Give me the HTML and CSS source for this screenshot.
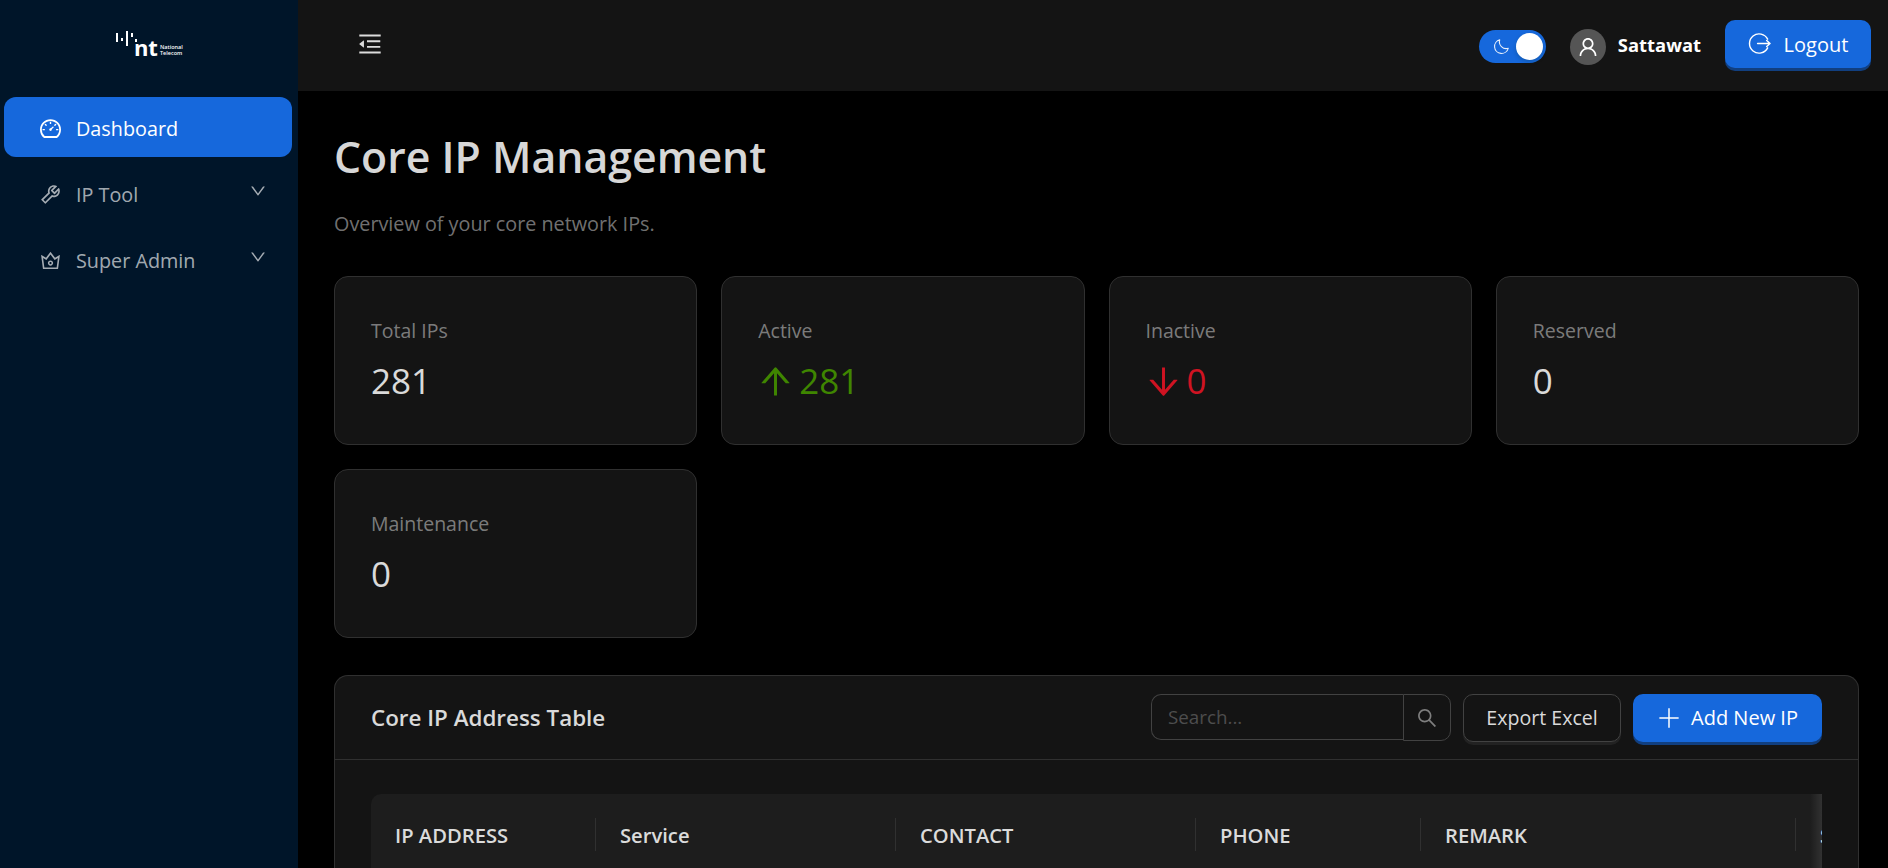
FILE: index.html
```html
<!DOCTYPE html>
<html lang="en">
<head>
<meta charset="utf-8">
<title>Core IP Management</title>
<link rel="stylesheet" href="styles.css">
</head>
<body>
<div class="app">
  <aside class="sidebar">
    <div class="logo">
      <div class="logo-ticks">
        <span class="tick t1"></span><span class="tick t2"></span><span class="tick t3"></span><span class="tick t4"></span><span class="tick t5"></span>
      </div>
      <span class="logo-nt">nt</span>
      <span class="logo-sub">National<br>Telecom</span>
    </div>
    <nav class="menu">
      <a class="menu-item active">
        <svg class="menu-icon" viewBox="64 64 896 896" fill="currentColor"><path d="M924.8 385.6a446.7 446.7 0 00-96-142.4 446.7 446.7 0 00-142.4-96C631.1 123.8 572.5 112 512 112s-119.1 11.8-174.4 35.2a446.7 446.7 0 00-142.4 96 446.7 446.7 0 00-96 142.4C76 440.9 64 499.5 64 560c0 132.7 58.3 257.7 159.9 343.1l1.7 1.4c5.8 4.8 13.1 7.5 20.6 7.5h531.7c7.5 0 14.8-2.7 20.6-7.5l1.7-1.4C901.7 817.7 960 692.7 960 560c0-60.5-12-119.1-35.2-174.4zM761.4 836H262.6A371.12 371.12 0 01140 560c0-99.4 38.7-192.8 109-263 70.3-70.3 163.7-109 263-109 99.4 0 192.8 38.7 263 109 70.3 70.3 109 163.7 109 263 0 105.6-44.5 205.5-122.6 276zM623.5 421.5a8.03 8.03 0 00-11.3 0L527.7 506c-18.7-5-39.4-.2-54.1 14.5a55.95 55.95 0 000 79.2 55.95 55.95 0 0079.2 0 55.87 55.87 0 0014.5-54.1l84.5-84.5c3.1-3.1 3.1-8.2 0-11.3l-28.3-28.3zM490 320h44c4.4 0 8-3.6 8-8v-80c0-4.4-3.6-8-8-8h-44c-4.4 0-8 3.6-8 8v80c0 4.4 3.6 8 8 8zm260 218v44c0 4.4 3.6 8 8 8h80c4.4 0 8-3.6 8-8v-44c0-4.4-3.6-8-8-8h-80c-4.4 0-8 3.6-8 8zm12.7-197.2l-31.1-31.1a8.03 8.03 0 00-11.3 0l-56.6 56.6a8.03 8.03 0 000 11.3l31.1 31.1c3.1 3.1 8.2 3.1 11.3 0l56.6-56.6c3.1-3.1 3.1-8.2 0-11.3zm-458.6-31.1a8.03 8.03 0 00-11.3 0l-31.1 31.1a8.03 8.03 0 000 11.3l56.6 56.6c3.1 3.1 8.2 3.1 11.3 0l31.1-31.1c3.1-3.1 3.1-8.2 0-11.3l-56.6-56.6zM262 530h-80c-4.4 0-8 3.6-8 8v44c0 4.4 3.6 8 8 8h80c4.4 0 8-3.6 8-8v-44c0-4.4-3.6-8-8-8z"/></svg>
        <span class="menu-label">Dashboard</span>
      </a>
      <a class="menu-item">
        <svg class="menu-icon" viewBox="64 64 896 896" fill="currentColor"><path d="M876.6 239.5c-.5-.9-1.2-1.8-2-2.5-5-5-13.1-5-18.1 0L684.2 409.3l-67.9-67.9L788.7 169c.8-.8 1.4-1.6 2-2.5 3.6-6.1 1.6-13.9-4.5-17.5-98.2-58-226.8-44.7-311.3 39.7-67 67-89.2 162-66.5 247.4l-293 293c-3 3-2.8 7.9.3 11l169.7 169.7c3.1 3.1 8.1 3.3 11 .3l292.9-292.9c85.5 22.8 180.5.7 247.6-66.4 84.4-84.5 97.7-213.1 39.7-311.3zM786 499.8c-58.1 58.1-145.3 69.3-214.6 33.6l-8.8 8.8-.1-.1-274 274.1-79.2-79.2 230.1-230.1s0 .1.1.1l52.8-52.8c-35.7-69.3-24.5-156.5 33.6-214.6a184.2 184.2 0 01144-53.5L537 318.9a32.05 32.05 0 000 45.3l124.5 124.5a32.05 32.05 0 0045.3 0l132.8-132.8c3.7 51.8-14.4 104.8-53.6 143.9z"/></svg>
        <span class="menu-label">IP Tool</span>
        <svg class="menu-caret" viewBox="64 64 896 896" fill="currentColor"><path d="M884 256h-75c-5.1 0-9.9 2.5-12.9 6.6L512 654.2 227.9 262.6c-3-4.1-7.8-6.6-12.9-6.6h-75c-6.5 0-10.3 7.4-6.5 12.7l352.6 486.1c12.8 17.6 39 17.6 51.7 0l352.6-486.1c3.9-5.3.1-12.7-6.4-12.7z"/></svg>
      </a>
      <a class="menu-item">
        <svg class="menu-icon" viewBox="64 64 896 896" fill="currentColor"><path d="M899.6 276.5L705 396.4 518.4 147.5a8.06 8.06 0 00-12.9 0L319 396.4 124.3 276.5c-5.7-3.5-13.1 1.2-12.2 7.9L188.5 865c1.1 7.9 7.9 14 16 14h615.1c8 0 14.9-6 15.9-14l76.4-580.6c.8-6.7-6.5-11.4-12.3-7.9zm-126 534.1H250.3l-53.8-409.4 139.8 86.1L512 252.9l175.7 234.4 139.8-86.1-53.9 409.4zM512 509c-62.1 0-112.6 50.5-112.6 112.6S449.9 734.2 512 734.2s112.6-50.5 112.6-112.6S574.1 509 512 509zm0 160.9c-26.6 0-48.2-21.6-48.2-48.3 0-26.6 21.6-48.3 48.2-48.3 26.6 0 48.2 21.6 48.2 48.3 0 26.7-21.6 48.3-48.2 48.3z"/></svg>
        <span class="menu-label">Super Admin</span>
        <svg class="menu-caret" viewBox="64 64 896 896" fill="currentColor"><path d="M884 256h-75c-5.1 0-9.9 2.5-12.9 6.6L512 654.2 227.9 262.6c-3-4.1-7.8-6.6-12.9-6.6h-75c-6.5 0-10.3 7.4-6.5 12.7l352.6 486.1c12.8 17.6 39 17.6 51.7 0l352.6-486.1c3.9-5.3.1-12.7-6.4-12.7z"/></svg>
      </a>
    </nav>
  </aside>

  <div class="main">
    <header class="topbar">
      <svg class="collapse-icon" viewBox="64 64 896 896" fill="currentColor"><path d="M408 442h480c4.4 0 8-3.6 8-8v-56c0-4.4-3.6-8-8-8H408c-4.4 0-8 3.6-8 8v56c0 4.4 3.6 8 8 8zm-8 204c0 4.4 3.6 8 8 8h480c4.4 0 8-3.6 8-8v-56c0-4.4-3.6-8-8-8H408c-4.4 0-8 3.6-8 8v56zm504-486H120c-4.4 0-8 3.6-8 8v56c0 4.4 3.6 8 8 8h784c4.4 0 8-3.6 8-8v-56c0-4.4-3.6-8-8-8zm0 632H120c-4.4 0-8 3.6-8 8v56c0 4.4 3.6 8 8 8h784c4.4 0 8-3.6 8-8v-56c0-4.4-3.6-8-8-8zM115.4 518.9L271.7 642c5.8 4.6 14.4.5 14.4-6.9V388.9c0-7.4-8.5-11.5-14.4-6.9L115.4 505.1a8.74 8.74 0 000 13.8z"/></svg>
      <div class="topbar-right">
        <div class="toggle">
          <svg class="toggle-moon" viewBox="0 0 24 24" fill="none" stroke="currentColor" stroke-width="1.5" stroke-linejoin="round"><path d="M9.5 2.5A9.6 9.6 0 0 0 21.5 14.5 9.8 9.8 0 1 1 9.5 2.5Z"/></svg>
          <span class="toggle-knob"></span>
        </div>
        <div class="avatar">
          <svg class="avatar-icon" viewBox="64 64 896 896" fill="currentColor"><path d="M858.5 763.6a374 374 0 00-80.6-119.5 375.63 375.63 0 00-119.5-80.6c-.4-.2-.8-.3-1.2-.5C719.5 518 760 444.7 760 362c0-137-111-248-248-248S264 225 264 362c0 82.7 40.5 156 102.8 201.1-.4.2-.8.3-1.2.5-44.8 18.9-85 46-119.5 80.6a375.63 375.63 0 00-80.6 119.5A371.7 371.7 0 00136 901.8a8 8 0 008 8.2h60c4.4 0 7.9-3.5 8-7.8 2-77.2 33-149.5 87.8-204.3 56.7-56.7 132-87.9 212.2-87.9s155.5 31.2 212.2 87.9C779 752.7 810 825 812 902.2c.1 4.4 3.6 7.8 8 7.8h60a8 8 0 008-8.2c-1-47.8-10.9-94.3-29.5-138.2zM512 534c-45.9 0-89.1-17.9-121.6-50.4S340 407.9 340 362c0-45.9 17.9-89.1 50.4-121.6S466.1 190 512 190s89.1 17.9 121.6 50.4S684 316.1 684 362c0 45.9-17.9 89.1-50.4 121.6S557.9 534 512 534z"/></svg>
        </div>
        <span class="username">Sattawat</span>
        <button class="btn btn-primary btn-logout">
          <svg class="btn-icon logout-icon" viewBox="0 0 24 24" fill="none" stroke="currentColor" stroke-width="1.5" stroke-linecap="round" stroke-linejoin="round"><path d="M20.5 7.5A10 10 0 1 0 20.5 16.5"/><path d="M10 12H23M19.5 8.8 23 12 19.5 15.2"/></svg>
          <span class="btn-text">Logout</span>
        </button>
      </div>
    </header>

    <main class="content">
      <h1 class="page-title">Core IP Management</h1>
      <p class="page-sub">Overview of your core network IPs.</p>

      <section class="stats">
        <div class="stat-card">
          <div class="stat-label">Total IPs</div>
          <div class="stat-value">281</div>
        </div>
        <div class="stat-card">
          <div class="stat-label">Active</div>
          <div class="stat-value up">
            <svg class="stat-arrow" viewBox="64 64 896 896" fill="currentColor"><path d="M868 545.5L536.1 163a31.96 31.96 0 00-48.3 0L156 545.5a7.97 7.97 0 006 13.2h81c4.6 0 9-2 12.1-5.5L474 300.9V864c0 4.4 3.6 8 8 8h60c4.4 0 8-3.6 8-8V300.9l218.9 252.3c3 3.5 7.4 5.5 12.1 5.5h81c6.8 0 10.5-8 6-13.2z"/></svg>
            <span>281</span>
          </div>
        </div>
        <div class="stat-card">
          <div class="stat-label">Inactive</div>
          <div class="stat-value down">
            <svg class="stat-arrow" viewBox="64 64 896 896" fill="currentColor"><path d="M862 465.3h-81c-4.6 0-9 2-12.1 5.5L550 723.1V160c0-4.4-3.6-8-8-8h-60c-4.4 0-8 3.6-8 8v563.1L255.1 470.8c-3-3.5-7.4-5.5-12.1-5.5h-81c-6.8 0-10.5 8.1-6 13.2L487.9 861a31.96 31.96 0 0048.3 0L868 478.5c4.5-5.2.8-13.2-6-13.2z"/></svg>
            <span>0</span>
          </div>
        </div>
        <div class="stat-card">
          <div class="stat-label">Reserved</div>
          <div class="stat-value">0</div>
        </div>
        <div class="stat-card">
          <div class="stat-label">Maintenance</div>
          <div class="stat-value">0</div>
        </div>
      </section>

      <section class="panel">
        <div class="panel-head">
          <h2 class="panel-title">Core IP Address Table</h2>
          <div class="panel-actions">
            <div class="search">
              <input class="search-input" type="text" placeholder="Search...">
              <button class="search-btn">
                <svg class="search-icon" viewBox="64 64 896 896" fill="currentColor"><path d="M909.6 854.5L649.9 594.8C690.2 542.7 712 479 712 412c0-80.2-31.3-155.4-87.9-212.1-56.6-56.7-132-87.9-212.1-87.9s-155.5 31.3-212.1 87.9C143.2 256.5 112 331.8 112 412c0 80.1 31.3 155.5 87.9 212.1C256.5 680.8 331.8 712 412 712c67 0 130.6-21.8 182.7-62l259.7 259.6a8.2 8.2 0 0011.6 0l43.6-43.5a8.2 8.2 0 000-11.6zM570.4 570.4C528 612.7 471.8 636 412 636s-116-23.3-158.4-65.6C211.3 528 188 471.8 188 412s23.3-116.1 65.6-158.4C296 211.3 352.2 188 412 188s116.1 23.2 158.4 65.6S636 352.2 636 412s-23.3 116.1-65.6 158.4z"/></svg>
              </button>
            </div>
            <button class="btn btn-default btn-export">Export Excel</button>
            <button class="btn btn-primary btn-add">
              <svg class="btn-icon plus" viewBox="64 64 896 896" fill="currentColor"><path d="M484 152h56v720h-56z"/><path d="M152 484h720v56H152z"/></svg>
              <span>Add New IP</span>
            </button>
          </div>
        </div>
        <div class="panel-body">
          <div class="table-wrap">
            <table class="ip-table">
              <colgroup>
                <col class="c-ip"><col class="c-service"><col class="c-contact"><col class="c-phone"><col class="c-remark"><col class="c-status">
              </colgroup>
              <thead>
                <tr>
                  <th>IP ADDRESS</th>
                  <th>Service</th>
                  <th>CONTACT</th>
                  <th>PHONE</th>
                  <th>REMARK</th>
                  <th>STATUS</th>
                </tr>
              </thead>
            </table>
            <span class="table-shadow"></span>
          </div>
        </div>
      </section>
    </main>
  </div>
</div>
</body>
</html>
```
FILE: styles.css
```css
* { box-sizing: border-box; }
html, body { margin: 0; padding: 0; height: 100%; overflow: hidden; background: #000; }
body { font-family: "Open Sans", "Noto Sans", "Liberation Sans", sans-serif; color: rgba(255,255,255,.85); }

.app { display: flex; height: 868px; overflow: hidden; }

/* Sidebar */
.sidebar { width: 298px; flex: none; background: #001529; padding: 0 6px 0 4px; }
.logo { height: 97px; color: #fff; position: relative; }
.logo-ticks { position: absolute; left: 112px; top: 31px; width: 22px; height: 15px; }
.tick { position: absolute; background: #fff; width: 2.4px; }
.t1 { left: 0; top: 2px; height: 9px; }
.t2 { left: 5px; top: 7px; height: 3px; }
.t3 { left: 10px; top: 0; height: 15px; }
.t4 { left: 15px; top: 2px; height: 4px; }
.t5 { left: 19px; top: 8px; height: 3px; }
.logo-nt { position: absolute; left: 130px; top: 35px; font-size: 22px; line-height: 24px; font-weight: 700; letter-spacing: -.3px; }
.logo-sub { position: absolute; left: 156px; top: 44px; font-size: 5.5px; line-height: 6px; font-weight: 600; white-space: nowrap; }

.menu { display: flex; flex-direction: column; gap: 6px; }
.menu-item { height: 60px; display: flex; align-items: center; padding: 2px 26px 0 36px; border-radius: 12px; color: rgba(255,255,255,.65); font-size: 19.8px; }
.menu-item.active { background: #1668dc; color: #fff; }
.menu-icon { width: 21px; height: 21px; flex: none; margin-right: 15px; }
.menu-label { flex: 1; }
.menu-caret { width: 16px; height: 16px; flex: none; margin-top: -6px; }

/* Main */
.main { flex: 1; min-width: 0; display: flex; flex-direction: column; }
.topbar { height: 91px; flex: none; background: #141414; display: flex; align-items: center; justify-content: space-between; padding: 0 17px 4px 60px; }
.collapse-icon { width: 24px; height: 24px; color: rgba(255,255,255,.85); }
.topbar-right { display: flex; align-items: center; }
.toggle { width: 67px; height: 33px; border-radius: 17px; background: #1668dc; position: relative; display: flex; align-items: center; padding-left: 14px; margin: 6px 24px 0 0; }
.toggle-moon { width: 17px; height: 17px; color: rgba(255,255,255,.9); }
.toggle-knob { position: absolute; right: 3px; top: 3px; width: 27px; height: 27px; border-radius: 50%; background: #fff; box-shadow: 0 2px 4px rgba(0,35,11,.2); }
.avatar { width: 36px; height: 36px; border-radius: 50%; background: #555; display: flex; align-items: center; justify-content: center; margin: 6px 12px 0 0; }
.avatar-icon { width: 20px; height: 20px; color: #fff; }
.username { font-size: 18.4px; font-weight: 700; color: #fff; margin: 2px 24px 0 0; }

.btn { font-family: inherit; height: 48px; border-radius: 10px; display: inline-flex; align-items: center; justify-content: center; font-size: 20px; cursor: pointer; padding: 0; }
.btn-primary { background: #1668dc; color: #fff; border: 0; box-shadow: 0 3px 0 #113f80; }
.btn-default { background: #141414; color: rgba(255,255,255,.85); border: 1px solid #424242; box-shadow: 0 3px 0 #222; }
.btn-icon { flex: none; }
.btn-text { padding-top: 1px; }
.logout-icon { width: 23px; height: 23px; margin-right: 13px; }
.btn-logout { width: 146px; }
.btn-add { width: 189px; }
.btn-export { width: 158px; margin-right: 12px; font-size: 19.6px; }
.plus { width: 24px; height: 24px; margin-right: 10px; }

/* Content */
.content { flex: 1; min-height: 0; padding: 0 29px 0 36px; overflow: hidden; }
.page-title { margin: 40px 0 0; font-size: 42.8px; line-height: 52px; font-weight: 600; color: rgba(255,255,255,.85); }
.page-sub { margin: 27px 0 0; font-size: 19.8px; line-height: 28px; color: rgba(255,255,255,.45); }

.stats { display: grid; grid-template-columns: repeat(4, 1fr); gap: 24px; margin-top: 38px; }
.stat-card { height: 169px; background: #141414; border: 1px solid #303030; border-radius: 14px; padding: 40px 36px 0; }
.stat-label { font-size: 19.5px; line-height: 28px; color: rgba(255,255,255,.45); }
.stat-value { display: flex; align-items: center; margin-top: 13px; font-size: 35px; line-height: 46px; color: rgba(255,255,255,.85); }
.up { color: #3f8600; }
.down { color: #cf1322; }
.stat-arrow { width: 35px; height: 35px; margin-right: 6px; }

.panel { margin-top: 37px; background: #141414; border: 1px solid #303030; border-bottom: 0; border-radius: 14px 14px 0 0; }
.panel-head { height: 84px; display: flex; align-items: center; justify-content: space-between; padding: 0 36px; border-bottom: 1px solid #303030; }
.panel-title { margin: 0; font-size: 22.4px; font-weight: 600; color: rgba(255,255,255,.85); }
.panel-actions { display: flex; align-items: center; }
.search { display: flex; width: 300px; height: 47px; margin-right: 12px; }
.search-input { flex: 1; min-width: 0; height: 46px; background: #141414; border: 1px solid #424242; border-right: 0; border-radius: 10px 0 0 10px; font: 18.8px "Open Sans", sans-serif; color: #fff; padding: 0 16px; outline: 0; }
.search-input::placeholder { color: rgba(255,255,255,.25); }
.search-btn { width: 48px; height: 47px; flex: none; background: #141414; border: 1px solid #424242; border-radius: 0 10px 10px 0; color: rgba(255,255,255,.45); display: flex; align-items: center; justify-content: center; padding: 0; }
.search-icon { width: 20px; height: 20px; }

.panel-body { padding: 34px 36px 0; }
.table-wrap { position: relative; overflow: hidden; border-radius: 10px 0 0 0; height: 82px; }
.ip-table { width: 1600px; table-layout: fixed; border-collapse: collapse; background: #1d1d1d; }
.c-ip { width: 224px; }
.c-service { width: 300px; }
.c-contact { width: 300px; }
.c-phone { width: 225px; }
.c-remark { width: 375px; }
.c-status { width: 176px; }
.ip-table th { height: 82px; padding: 0 24px; text-align: left; font-size: 20.2px; font-weight: 600; color: rgba(255,255,255,.85); position: relative; white-space: nowrap; }
.ip-table th + th { padding-left: 25px; }
.ip-table th + th::before { content: ""; position: absolute; left: 0; top: 24px; height: 33px; width: 1px; background: #303030; }
.table-shadow { position: absolute; right: 0; top: 0; bottom: 0; width: 12px; background: linear-gradient(to left, rgba(255,255,255,.09), rgba(255,255,255,0)); }
```
